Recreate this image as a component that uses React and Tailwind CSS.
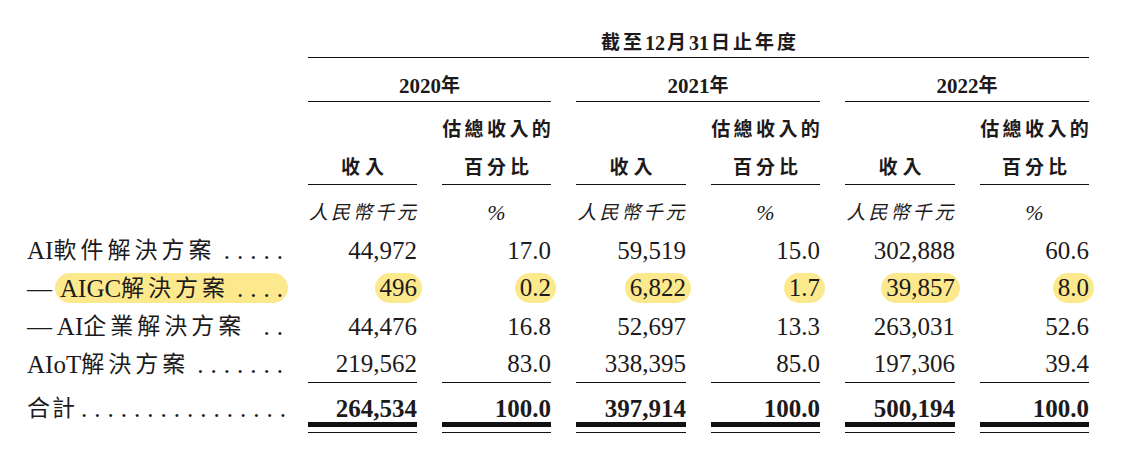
const grid = "grid grid-cols-[256px_109px_109px_110px_109px_110px_109px] gap-x-[25px]"

const Zh = ({ children, className = "tracking-[4px]" }) => (
  <span className={`text-[23px] ${className}`}>{children}</span>
)

const Dots = ({ n }) => (
  <span className="flex-1 text-right tracking-[7px] -mr-[7px] whitespace-nowrap">{".".repeat(n)}</span>
)

const rows = [
  { label: <>AI<Zh>軟件解決方案</Zh></>, dots: 5, vals: ["44,972", "17.0", "59,519", "15.0", "302,888", "60.6"] },
  { label: <>AIGC<Zh>解決方案</Zh></>, dots: 4, hl: true, vals: ["496", "0.2", "6,822", "1.7", "39,857", "8.0"] },
  { label: <>— AI<Zh>企業解決方案</Zh></>, dots: 2, vals: ["44,476", "16.8", "52,697", "13.3", "263,031", "52.6"] },
  { label: <>AIoT<Zh>解決方案</Zh></>, dots: 7, vals: ["219,562", "83.0", "338,395", "85.0", "197,306", "39.4"] },
]

const totals = ["264,534", "100.0", "397,914", "100.0", "500,194", "100.0"]

export default function App() {
  return (
    <div className="w-[1135px] h-[450px] bg-white pl-[27px] pt-[28px] text-[#1d1a1b] font-['Liberation_Serif','Noto_Sans_CJK_TC',serif] overflow-hidden">
      {/* 截至12月31日止年度 */}
      <div className={grid}>
        <div />
        <div className="col-span-6 h-[30px] border-b border-[#111] flex items-center justify-center text-[20px] font-bold leading-none">
          <span className="pl-[3px] flex items-center">
            <span className="text-[19px] tracking-[3px]">截至</span>12<span className="text-[19px] tracking-[3px] pl-[2px]">月</span>31<span className="text-[19px] tracking-[3px] pl-[2px]">日止年度</span>
          </span>
        </div>
      </div>

      {/* years */}
      <div className={grid}>
        <div />
        {["2020", "2021", "2022"].map((y) => (
          <div key={y} className="col-span-2 h-[44px] border-b border-[#111] flex justify-center pt-[14px] leading-[28px] text-[21px] font-bold">
            {y}<span className="text-[19px]">年</span>
          </div>
        ))}
      </div>

      {/* column heads */}
      <div className={grid}>
        <div />
        {[0, 1, 2].map((i) => (
          <div key={i} className="contents">
            <div className="h-[83px] border-b border-[#111] flex flex-col justify-end items-center text-[19px] font-bold">
              <span className="leading-[32px] tracking-[5px] -mr-[5px]">收入</span>
            </div>
            <div className="h-[83px] border-b border-[#111] flex flex-col justify-end items-center text-[19px] font-bold">
              <span className="leading-[32px] mb-[6px] tracking-[3.4px] -mr-[3.4px] whitespace-nowrap">估總收入的</span>
              <span className="leading-[32px] tracking-[4px] -mr-[4px]">百分比</span>
            </div>
          </div>
        ))}
      </div>

      {/* units */}
      <div className={grid}>
        <div />
        {[0, 1, 2].map((i) => (
          <div key={i} className="contents">
            <div className="h-[46px] pt-[14px] flex justify-center leading-[28px] italic text-[19px] tracking-[3px] -mr-[3px] whitespace-nowrap">人民幣千元</div>
            <div className="h-[46px] pt-[14px] flex justify-center leading-[28px] italic text-[22px]">%</div>
          </div>
        ))}
      </div>

      {/* data rows */}
      {rows.map((r, ri) => (
        <div key={ri} className={grid}>
          <div className="h-[38px] flex items-center text-[25px] leading-none whitespace-nowrap">
            {r.hl ? (
              <div className="w-[259px] flex items-center">
                <span>—</span>
                <span className="flex-1 flex items-center rounded-full bg-[#fce88d] h-[30px] pl-[5px] pr-[5px] -mr-[5px] ml-[3px]">
                  {r.label}
                  <Dots n={r.dots} />
                </span>
              </div>
            ) : (
              <div className="w-[259px] flex items-center">
                {r.label}
                <Dots n={r.dots} />
              </div>
            )}
          </div>
          {r.vals.map((v, vi) => (
            <div key={vi} className={`h-[38px] flex items-center justify-end text-[25px] leading-none ${ri === rows.length - 1 ? "border-b border-[#111]" : ""}`}>
              {r.hl ? (
                <span className="inline-block rounded-full bg-[#fce88d] px-[5px] -mr-[5px] leading-[30px]">{v}</span>
              ) : (
                v
              )}
            </div>
          ))}
        </div>
      ))}

      {/* 合計 */}
      <div className={grid}>
        <div className="pt-[13px] text-[25px] leading-[26px] whitespace-nowrap">
          <div className="w-[259px] flex items-center">
            <Zh className="tracking-[2px]">合計</Zh>
            <Dots n={16} />
          </div>
        </div>
        {totals.map((v, i) => (
          <div key={i} className="pt-[13px] flex flex-col">
            <div className="text-right text-[25px] font-bold leading-[26px]">{v}</div>
            <div className="h-[5px] bg-[#111]" />
            <div className="h-px bg-[#111] mt-[5px]" />
          </div>
        ))}
      </div>
    </div>
  )
}
